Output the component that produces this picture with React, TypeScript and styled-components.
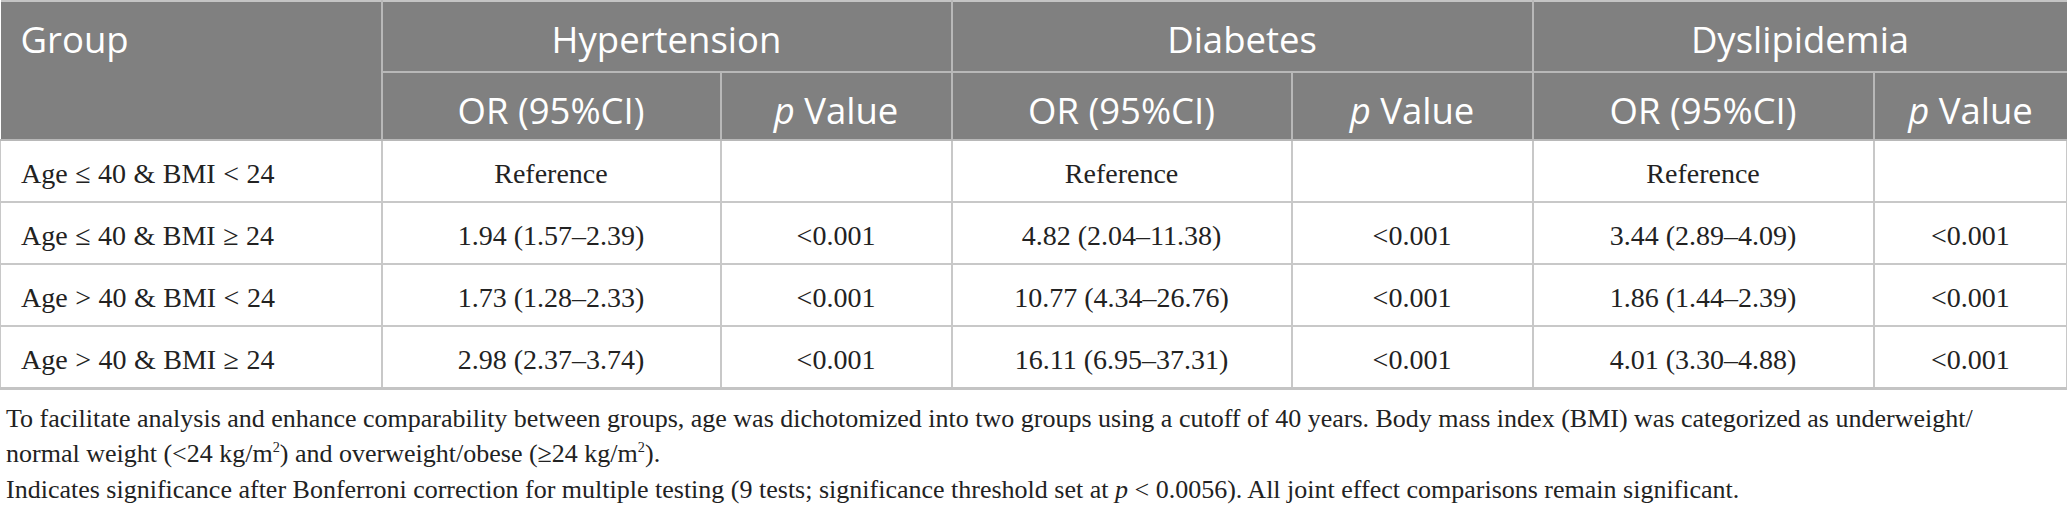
import React from "react";
import styled, { createGlobalStyle } from "styled-components";

const Global = createGlobalStyle`
  html, body { margin: 0; padding: 0; background: #ffffff; }
  body { width: 2067px; }
`;

const Page = styled.div`
  display: flex;
  flex-direction: column;
`;

const Table = styled.table`
  width: 2066px;
  border-collapse: collapse;
  table-layout: fixed;
  border-top: 2px solid #c4c4c4;
  border-bottom: 3px solid #c4c4c4;
`;

const HeadCell = styled.th<{ $align?: "left" | "center" }>`
  background: #808080;
  color: #ffffff;
  font-family: "Open Sans", "Lato", sans-serif;
  font-weight: 400;
  font-size: 36.5px;
  line-height: 40px;
  text-align: ${(p) => p.$align ?? "center"};
  vertical-align: top;
  padding: 17px 20px 0;
  border: 2px solid #b8b8b8;
  border-top: none;
  &:first-child { border-left: none; }
  &:last-child { border-right: none; }
`;

const HeadRow = styled.tr<{ $h: number }>`
  height: ${(p) => p.$h}px;
`;

const BodyRow = styled.tr`
  height: 62px;
`;

const Cell = styled.td<{ $align?: "left" | "center" }>`
  font-family: "Liberation Serif", "Times New Roman", serif;
  font-size: 28px;
  line-height: 32px;
  color: #222222;
  text-align: ${(p) => p.$align ?? "center"};
  vertical-align: middle;
  padding: 6px 20px 0;
  border: 2px solid #c8c8c8;
  &:first-child { border-left: 1px solid #c8c8c8; }
  &:last-child { border-right: 1px solid #c8c8c8; }
`;

const Wide = styled.span`
  word-spacing: 0.5px;
`;

const Foot = styled.div`
  font-family: "Liberation Serif", "Times New Roman", serif;
  font-size: 26px;
  color: #222222;
  padding: 11px 0 0 6px;
  display: flex;
  flex-direction: column;
`;

const FootLine = styled.div`
  white-space: nowrap;
  height: 35.5px;
  line-height: 35.5px;
`;

const Ital = styled.i`
  font-style: italic;
`;

const Sup = styled.sup`
  font-size: 0.55em;
  line-height: 0;
  vertical-align: 0.7em;
`;

type Row = { g: string; cells: string[] };

const rows: Row[] = [
  { g: "Age ≤ 40 & BMI < 24", cells: ["Reference", "", "Reference", "", "Reference", ""] },
  { g: "Age ≤ 40 & BMI ≥ 24", cells: ["1.94 (1.57–2.39)", "<0.001", "4.82 (2.04–11.38)", "<0.001", "3.44 (2.89–4.09)", "<0.001"] },
  { g: "Age > 40 & BMI < 24", cells: ["1.73 (1.28–2.33)", "<0.001", "10.77 (4.34–26.76)", "<0.001", "1.86 (1.44–2.39)", "<0.001"] },
  { g: "Age > 40 & BMI ≥ 24", cells: ["2.98 (2.37–3.74)", "<0.001", "16.11 (6.95–37.31)", "<0.001", "4.01 (3.30–4.88)", "<0.001"] },
];

const widths = [381, 339, 231, 340, 241, 341, 193];

const PVal = () => (
  <>
    <Ital>p</Ital> Value
  </>
);

export default function App() {
  return (
    <Page>
      <Global />
      <Table>
        <colgroup>
          {widths.map((w, i) => (
            <col key={i} style={{ width: w }} />
          ))}
        </colgroup>
        <thead>
          <HeadRow $h={71}>
            <HeadCell $align="left" rowSpan={2}>Group</HeadCell>
            <HeadCell colSpan={2}>Hypertension</HeadCell>
            <HeadCell colSpan={2}>Diabetes</HeadCell>
            <HeadCell colSpan={2}>Dyslipidemia</HeadCell>
          </HeadRow>
          <HeadRow $h={68}>
            <HeadCell>OR (95%CI)</HeadCell>
            <HeadCell><PVal /></HeadCell>
            <HeadCell>OR (95%CI)</HeadCell>
            <HeadCell><PVal /></HeadCell>
            <HeadCell>OR (95%CI)</HeadCell>
            <HeadCell><PVal /></HeadCell>
          </HeadRow>
        </thead>
        <tbody>
          {rows.map((r) => (
            <BodyRow key={r.g}>
              <Cell $align="left"><Wide>{r.g}</Wide></Cell>
              {r.cells.map((c, i) => (
                <Cell key={i}>{c}</Cell>
              ))}
            </BodyRow>
          ))}
        </tbody>
      </Table>
      <Foot>
        <FootLine>
          To facilitate analysis and enhance comparability between groups, age was dichotomized into two groups using a cutoff of 40 years. Body mass index (BMI) was categorized as underweight/
        </FootLine>
        <FootLine>
          normal weight (&lt;24 kg/m<Sup>2</Sup>) and overweight/obese (≥24 kg/m<Sup>2</Sup>).
        </FootLine>
        <FootLine>
          Indicates significance after Bonferroni correction for multiple testing (9 tests; significance threshold set at <Ital>p</Ital> &lt; 0.0056). All joint effect comparisons remain significant.
        </FootLine>
      </Foot>
    </Page>
  );
}
